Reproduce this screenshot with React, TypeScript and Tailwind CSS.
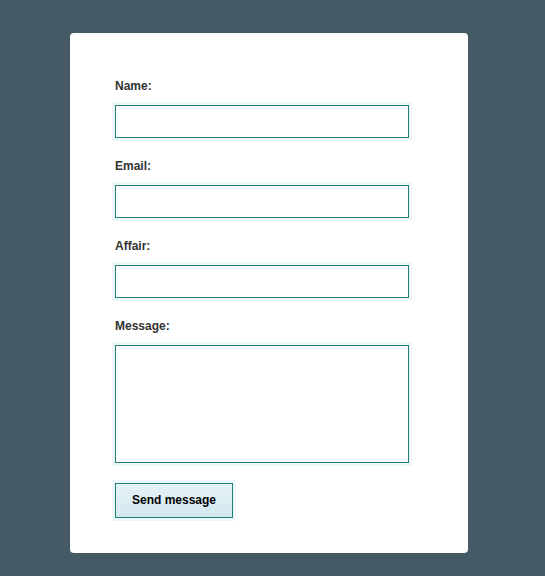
import React from 'react';

const fields = [
  { label: 'Name:', type: 'text' },
  { label: 'Email:', type: 'email' },
  { label: 'Affair:', type: 'text' },
];

const inputClass =
  'block w-[294px] border border-[#1f7f76] bg-white shadow-[0_0_0_3px_#eef8f9] outline-none';

const App: React.FC = () => {
  return (
    <div
      className="min-h-[576px] w-full bg-[#455a64] pt-[33px]"
      style={{ fontFamily: '"Liberation Sans", Arial, sans-serif' }}
    >
      <div className="ml-[70px] w-[398px] rounded-[4px] bg-white px-[45px] pt-[46px] pb-[35px]">
        <form onSubmit={(e) => e.preventDefault()}>
          {fields.map((f) => (
            <div key={f.label} className="mb-[21px]">
              <label className="mb-[12px] block text-[12px] font-bold leading-[14px] text-[#333]">
                {f.label}
              </label>
              <input type={f.type} className={`${inputClass} h-[33px]`} />
            </div>
          ))}
          <div className="mb-[20px]">
            <label className="mb-[12px] block text-[12px] font-bold leading-[14px] text-[#333]">
              Message:
            </label>
            <textarea className={`${inputClass} h-[118px] resize-none`} />
          </div>
          <button
            type="submit"
            className="block h-[35px] w-[118px] border border-[#1f7f76] bg-gradient-to-b from-[#e6f3f7] to-[#d3e8ef] pb-[1px] text-[12px] font-bold text-black shadow-[0_0_0_3px_#eef8f9]"
          >
            Send message
          </button>
        </form>
      </div>
    </div>
  );
};

export default App;
